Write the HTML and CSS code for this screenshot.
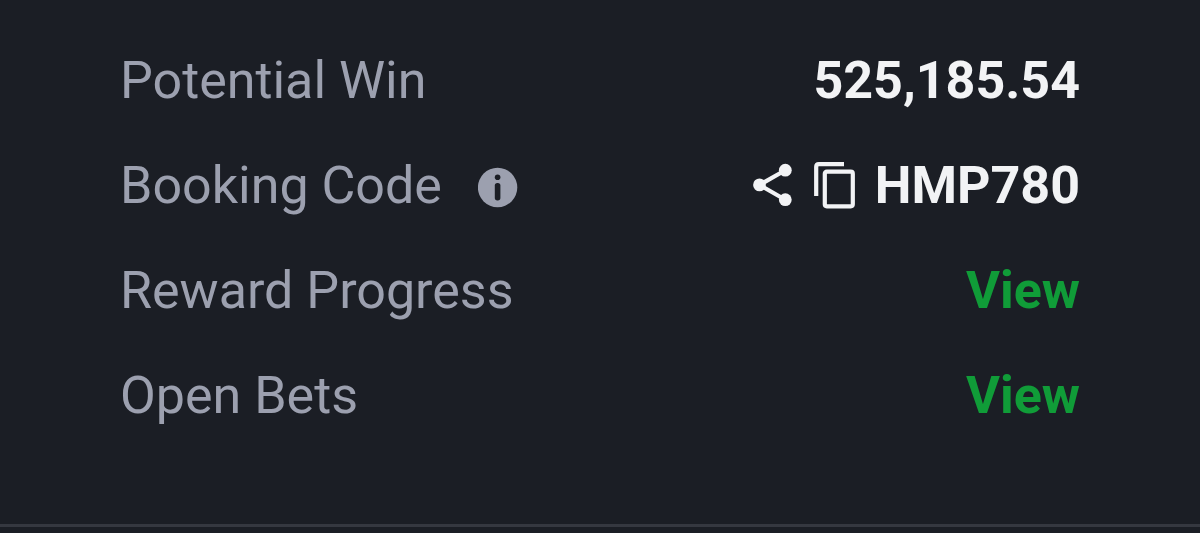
FILE: index.html
```html
<!DOCTYPE html>
<html lang="en">
<head>
<meta charset="utf-8">
<meta name="viewport" content="width=device-width, initial-scale=1">
<title>Bet details</title>
<link rel="stylesheet" href="styles.css">
</head>
<body>
<main class="summary">
  <dl class="rows">
    <div class="row">
      <dt class="label">Potential Win</dt>
      <dd class="value">525,185.54</dd>
    </div>
    <div class="row">
      <dt class="label">Booking Code
        <button class="icon-button" type="button" aria-label="About booking code">
          <svg width="40" height="44" viewBox="0 0 40 44" aria-hidden="true"><circle cx="19.6" cy="23.5" r="19.7" fill="#9ca0af"/><circle cx="19.6" cy="13.2" r="2.8" fill="#1b1e25"/><rect x="16.8" y="19" width="5.6" height="17.4" rx="2.6" fill="#1b1e25"/></svg>
        </button>
      </dt>
      <dd class="value code">
        <button class="icon-button" type="button" aria-label="Share">
          <svg width="40" height="48" viewBox="0 0 40 48" aria-hidden="true"><path d="M32.3 8.2 6.5 22.9l25.8 14.8" fill="none" stroke="#f2f3f5" stroke-width="4.2"/><g fill="#f2f3f5"><circle cx="32.3" cy="8.2" r="6.4"/><circle cx="6.5" cy="22.9" r="6.4"/><circle cx="32.3" cy="37.7" r="6.4"/></g></svg>
        </button>
        <button class="icon-button" type="button" aria-label="Copy code">
          <svg width="42" height="48" viewBox="0 0 42 48" aria-hidden="true"><g fill="none" stroke="#f2f3f5" stroke-width="4.2"><path d="M3.2 33.5V4.2q0-2.6 2.6-2.6h25.2" transform="translate(0 .5)"/><rect x="11.8" y="9.7" width="28" height="34.6" rx="2"/></g></svg>
        </button>
        <span>HMP780</span>
      </dd>
    </div>
    <div class="row">
      <dt class="label">Reward Progress</dt>
      <dd class="value"><a class="link" href="#rewards">View</a></dd>
    </div>
    <div class="row">
      <dt class="label">Open Bets</dt>
      <dd class="value"><a class="link" href="#bets">View</a></dd>
    </div>
  </dl>
</main>
</body>
</html>
```
FILE: styles.css
```css
* { box-sizing: border-box; }
body {
  margin: 0;
  background: #1b1e25;
  font-family: Roboto, "Liberation Sans", sans-serif;
  font-size: 52px;
  line-height: 61px;
}
.summary {
  padding: 50px 10% 98px;
  border-bottom: 3px solid #353840;
}
.rows {
  display: flex;
  flex-direction: column;
  gap: 44px;
  margin: 0;
}
.row {
  display: flex;
  justify-content: space-between;
  align-items: center;
}
.label {
  display: flex;
  align-items: center;
  gap: 36px;
  color: #9ca0af;
}
.value {
  margin: 0;
  color: #f2f3f5;
  font-weight: 700;
}
.code {
  display: flex;
  align-items: center;
  gap: 20px;
}
.icon-button {
  display: flex;
  padding: 0;
  border: 0;
  background: none;
  cursor: pointer;
}
.link {
  color: #109c38;
  text-decoration: none;
}
```
